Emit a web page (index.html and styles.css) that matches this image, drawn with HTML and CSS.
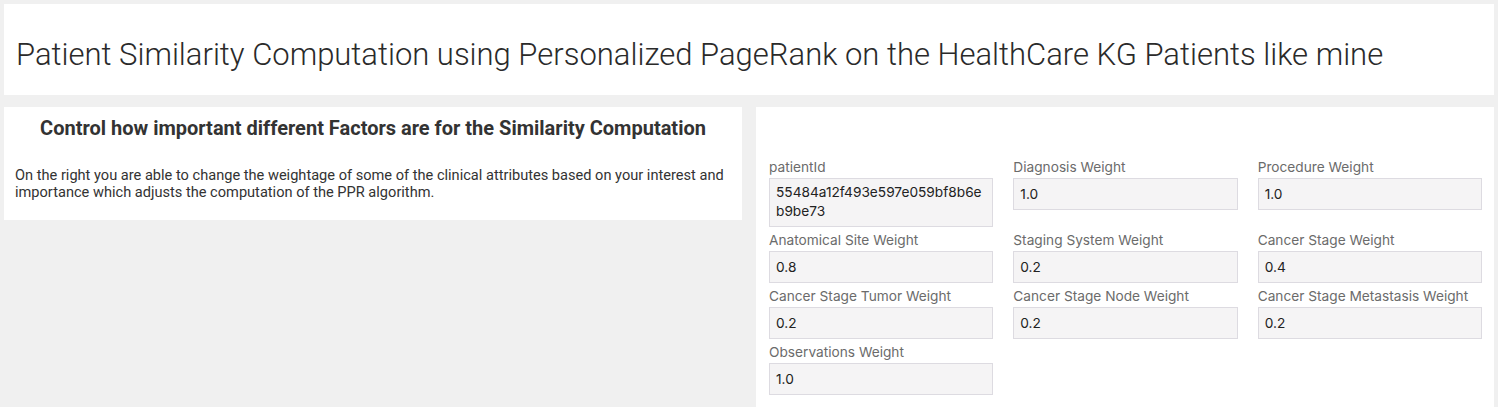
FILE: index.html
```html
<!DOCTYPE html>
<html lang="en">
<head>
    <meta charset="UTF-8">
    <meta name="viewport" content="width=device-width, initial-scale=1.0">
    <title>Patients like mine</title>
    <link rel="stylesheet" href="styles.css">
</head>

<body>
    <div class="title-card">
        <h1>Patient Similarity Computation using Personalized PageRank on the HealthCare KG Patients like mine</h1>
    </div>

    <div class="row">
        <div class="info-card">
            <h2>Control how important different Factors are for the Similarity Computation</h2>
            <p>On the right you are able to change the weightage of some of the clinical attributes based on your interest and importance which adjusts the computation of the PPR algorithm.</p>
        </div>

        <div class="form-card">
            <div class="field">
                <label>patientId</label>
                <div class="input tall">55484a12f493e597e059bf8b6eb9be73</div>
            </div>
            <div class="field">
                <label>Diagnosis Weight</label>
                <div class="input">1.0</div>
            </div>
            <div class="field">
                <label>Procedure Weight</label>
                <div class="input">1.0</div>
            </div>
            <div class="field">
                <label>Anatomical Site Weight</label>
                <div class="input">0.8</div>
            </div>
            <div class="field">
                <label>Staging System Weight</label>
                <div class="input">0.2</div>
            </div>
            <div class="field">
                <label>Cancer Stage Weight</label>
                <div class="input">0.4</div>
            </div>
            <div class="field">
                <label>Cancer Stage Tumor Weight</label>
                <div class="input">0.2</div>
            </div>
            <div class="field">
                <label>Cancer Stage Node Weight</label>
                <div class="input">0.2</div>
            </div>
            <div class="field">
                <label>Cancer Stage Metastasis Weight</label>
                <div class="input">0.2</div>
            </div>
            <div class="field">
                <label>Observations Weight</label>
                <div class="input">1.0</div>
            </div>
        </div>
    </div>
</body>
</html>
```

FILE: styles.css
```css
body{
    margin: 0;
    padding: 4px 4px 0 4px;
    background-color: #f0f0f0;
    font-family: Inter, "Noto Sans", sans-serif;
    overflow: hidden;
}
.title-card{
    background-color: #fff;
    height: 91px;
    box-sizing: border-box;
    display: flex;
    align-items: center;
    padding: 10px 12px 0 12px;
    margin-bottom: 12px;
}
.title-card h1{
    margin: 0;
    font-family: Roboto, "Liberation Sans", sans-serif;
    font-weight: 300;
    font-size: 31px;
    color: #2a2a2a;
}
.row{
    display: flex;
    gap: 14px;
    align-items: flex-start;
}
.info-card{
    background-color: #fff;
    width: 738px;
    height: 113px;
    box-sizing: border-box;
    padding: 7px 11px 0 11px;
}
.info-card h2{
    margin: 0;
    text-align: center;
    font-family: Roboto, "Liberation Sans", sans-serif;
    font-weight: bold;
    font-size: 20px;
    line-height: 28px;
    color: #333;
}
.info-card p{
    margin: 25px 0 0 0;
    font-family: Roboto, "Liberation Sans", sans-serif;
    font-size: 14.6px;
    line-height: 17px;
    color: #333;
}
.form-card{
    flex: 1;
    background-color: #fff;
    height: 249px;
    padding: 51px 12px 0 13px;
    display: grid;
    grid-template-columns: repeat(3, 1fr);
    column-gap: 20px;
    row-gap: 4px;
    align-content: start;
}
.field label{
    display: block;
    font-size: 13.7px;
    line-height: 18px;
    color: #6b6b6b;
    margin-bottom: 2px;
}
.input{
    box-sizing: border-box;
    height: 32px;
    padding: 6px 6px;
    background-color: #f5f4f5;
    border: 1px solid #dddbe1;
    font-size: 13.7px;
    line-height: 19px;
    color: #222;
    word-break: break-all;
}
.input.tall{
    height: 49px;
    padding-top: 4px;
}
```
